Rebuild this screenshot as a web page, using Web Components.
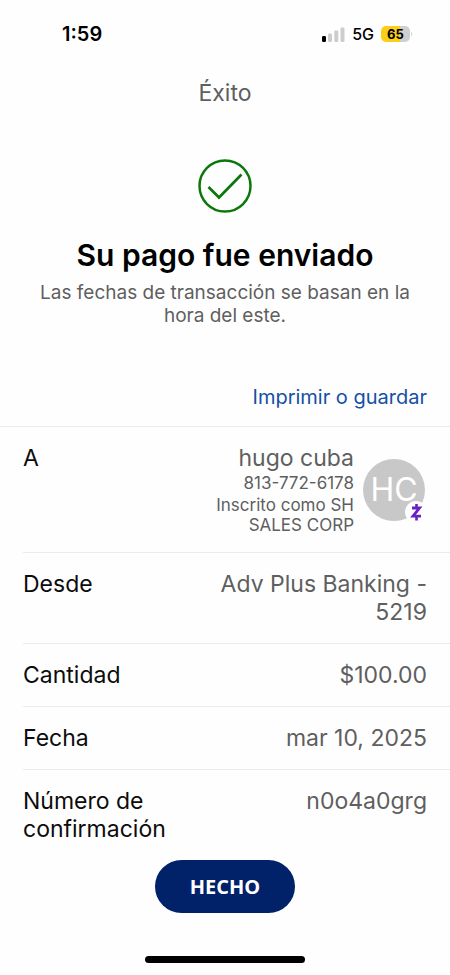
<!DOCTYPE html>
<html lang="es">
<head>
<meta charset="utf-8">
<meta name="viewport" content="width=device-width, initial-scale=1">
<title>Éxito</title>
<style>
  html, body { margin: 0; height: 100%; }
  body {
    background: #fefefe; color: #0c0c0c;
    font-family: Inter, "Liberation Sans", sans-serif;
    --muted: #5f5f5f; --line: #ebebeb; --link: #1450a3; --navy: #012169; --gutter: 23px;
  }
</style>
</head>
<body>
<payment-screen></payment-screen>

<script>
  const define = (name, html) => customElements.define(name, class extends HTMLElement {
    constructor() {
      super();
      const t = document.createElement('template');
      t.innerHTML = html;
      this.attachShadow({ mode: 'open' }).append(t.content.cloneNode(true));
    }
  });

  define('status-bar', `
    <style>
      :host { display: flex; justify-content: space-between; align-items: center; height: 68px; padding: 0 38px 0 62px; color: #000; }
      .time { font-size: 20px; font-weight: 600; }
      .side { display: flex; align-items: center; gap: 7px; }
      .net { font-size: 16px; font-weight: 500; }
      .battery { display: flex; align-items: center; gap: 1px; }
      .cell { width: 29px; height: 16px; line-height: 16px; border-radius: 5px; text-align: center; font-size: 13px; font-weight: 700;
        background: linear-gradient(90deg, #fbce17 65%, #cfcfcf 65%); }
      .tip { width: 1px; height: 4px; border-radius: 0 2px 2px 0; background: #cfcfcf; }
      svg { display: block; }
    </style>
    <span class="time">1:59</span>
    <div class="side">
      <svg width="23" height="15" viewBox="0 0 23 15" aria-hidden="true">
        <rect x="0" y="9" width="4" height="6" rx="1.2" fill="#000"/>
        <g fill="#cdcdcd"><rect x="6" y="6.500" width="4" height="8.500" rx="1.200"/><rect x="12.300" y="3.500" width="4" height="11.500" rx="1.200"/><rect x="18.500" y="0.500" width="4" height="14.500" rx="1.200"/></g>
      </svg>
      <span class="net">5G</span>
      <div class="battery"><div class="cell">65</div><div class="tip"></div></div>
    </div>`);

  define('success-banner', `
    <style>
      :host { display: block; text-align: center; padding: 0 var(--gutter); }
      svg { display: block; margin: 0 auto 24px; }
      h2 { margin: 0; font-size: 30px; line-height: 36px; font-weight: 600; color: #000; }
      p { margin: 8px 0 0; font-size: 19px; line-height: 23px; color: var(--muted); }
    </style>
    <svg width="54" height="54" viewBox="0 0 54 54" fill="none" stroke="#0c780c" stroke-width="2.500" aria-hidden="true">
      <circle cx="27" cy="27" r="25.500"/>
      <path d="M10.500 28 L21 38.500 L43.500 15.500" stroke-width="2.700"/>
    </svg>
    <h2><slot name="title"></slot></h2>
    <p><slot></slot></p>`);

  define('detail-row', `
    <style>
      :host { display: flex; justify-content: space-between; gap: 16px; margin-left: var(--gutter);
        padding: 17px var(--gutter) 17px 0; border-top: 1px solid var(--line); font-size: 23px; line-height: 28px; }
      :host([first]) { margin-left: 0; padding-left: var(--gutter); }
      :host([last]) { padding-bottom: 0; }
      .label { flex: 0 0 160px; }
      .value { flex: 1; min-width: 0; text-align: right; color: var(--muted); }
    </style>
    <div class="label"><slot name="label"></slot></div>
    <div class="value"><slot></slot></div>`);

  define('contact-avatar', `
    <style>
      :host { display: block; position: relative; flex: none; width: 62px; height: 62px; border-radius: 50%; background: #c8c8c8;
        color: #fff; font-size: 32px; line-height: 62px; text-align: center; }
      svg { position: absolute; right: -3px; bottom: -3px; }
    </style>
    <slot></slot>
    <svg width="24" height="24" viewBox="0 0 24 24" aria-label="Zelle" role="img">
      <circle cx="12" cy="12" r="11" fill="#fefefe"/>
      <g fill="none" stroke="#6a20c4" stroke-width="2.800"><path d="M8 8 H15.500 L9 16.200 H17"/><path d="M12.500 4 V8 M12.500 16 V20.500" stroke-width="2.600"/></g>
    </svg>`);

  define('contact-card', `
    <style>
      :host { display: flex; justify-content: flex-end; align-items: center; gap: 9px; margin-right: 2px; }
      .text { min-width: 0; font-size: 17px; line-height: 20px; }
      .name { font-size: 23px; line-height: 28px; }
      .phone { line-height: 23px; }
    </style>
    <div class="text">
      <div class="name"><slot name="name"></slot></div>
      <div class="phone"><slot name="phone"></slot></div>
      <div><slot></slot></div>
    </div>
    <contact-avatar><slot name="initials"></slot></contact-avatar>`);

  define('action-footer', `
    <style>
      :host { display: flex; flex-direction: column; align-items: center; padding: 16px 0 12px; gap: 43px; }
      button { border: 0; border-radius: 27px; height: 53px; padding: 0 32px; min-width: 140px; background: var(--navy); color: #fff;
        font: 700 20px/26px "Open Sans", sans-serif; cursor: pointer; }
      .home { width: 160px; height: 7px; border-radius: 4px; background: #000; }
    </style>
    <button type="button"><slot></slot></button>
    <div class="home"></div>`);

  define('payment-screen', `
    <style>
      :host { display: flex; flex-direction: column; height: 100vh; overflow: hidden; }
      status-bar, header, action-footer { flex: none; }
      h1 { margin: 0; padding: 10px 0; text-align: center; font-size: 23px; line-height: 30px; font-weight: 400; color: var(--muted); }
      main { flex: 1; min-height: 0; overflow-y: auto; scrollbar-width: none; }
      success-banner { padding-top: 41px; }
      .print { display: flex; justify-content: flex-end; padding: 57px var(--gutter) 16px; }
      a { color: var(--link); font-size: 20px; line-height: 26px; text-decoration: none; }
    </style>
    <status-bar></status-bar>
    <header><h1>Éxito</h1></header>
    <main>
      <success-banner>
        <span slot="title">Su pago fue enviado</span>
        Las fechas de transacción se basan en la hora del este.
      </success-banner>
      <div class="print"><a href="#imprimir">Imprimir o guardar</a></div>
      <detail-row first>
        <span slot="label">A</span>
        <contact-card>
          <span slot="name">hugo cuba</span>
          <span slot="phone">813-772-6178</span>
          Inscrito como SH SALES CORP
          <span slot="initials">HC</span>
        </contact-card>
      </detail-row>
      <detail-row><span slot="label">Desde</span>Adv Plus Banking - 5219</detail-row>
      <detail-row><span slot="label">Cantidad</span>$100.00</detail-row>
      <detail-row><span slot="label">Fecha</span>mar 10, 2025</detail-row>
      <detail-row last><span slot="label">Número de confirmación</span>n0o4a0grg</detail-row>
    </main>
    <action-footer>HECHO</action-footer>`);
</script>
</body>
</html>
